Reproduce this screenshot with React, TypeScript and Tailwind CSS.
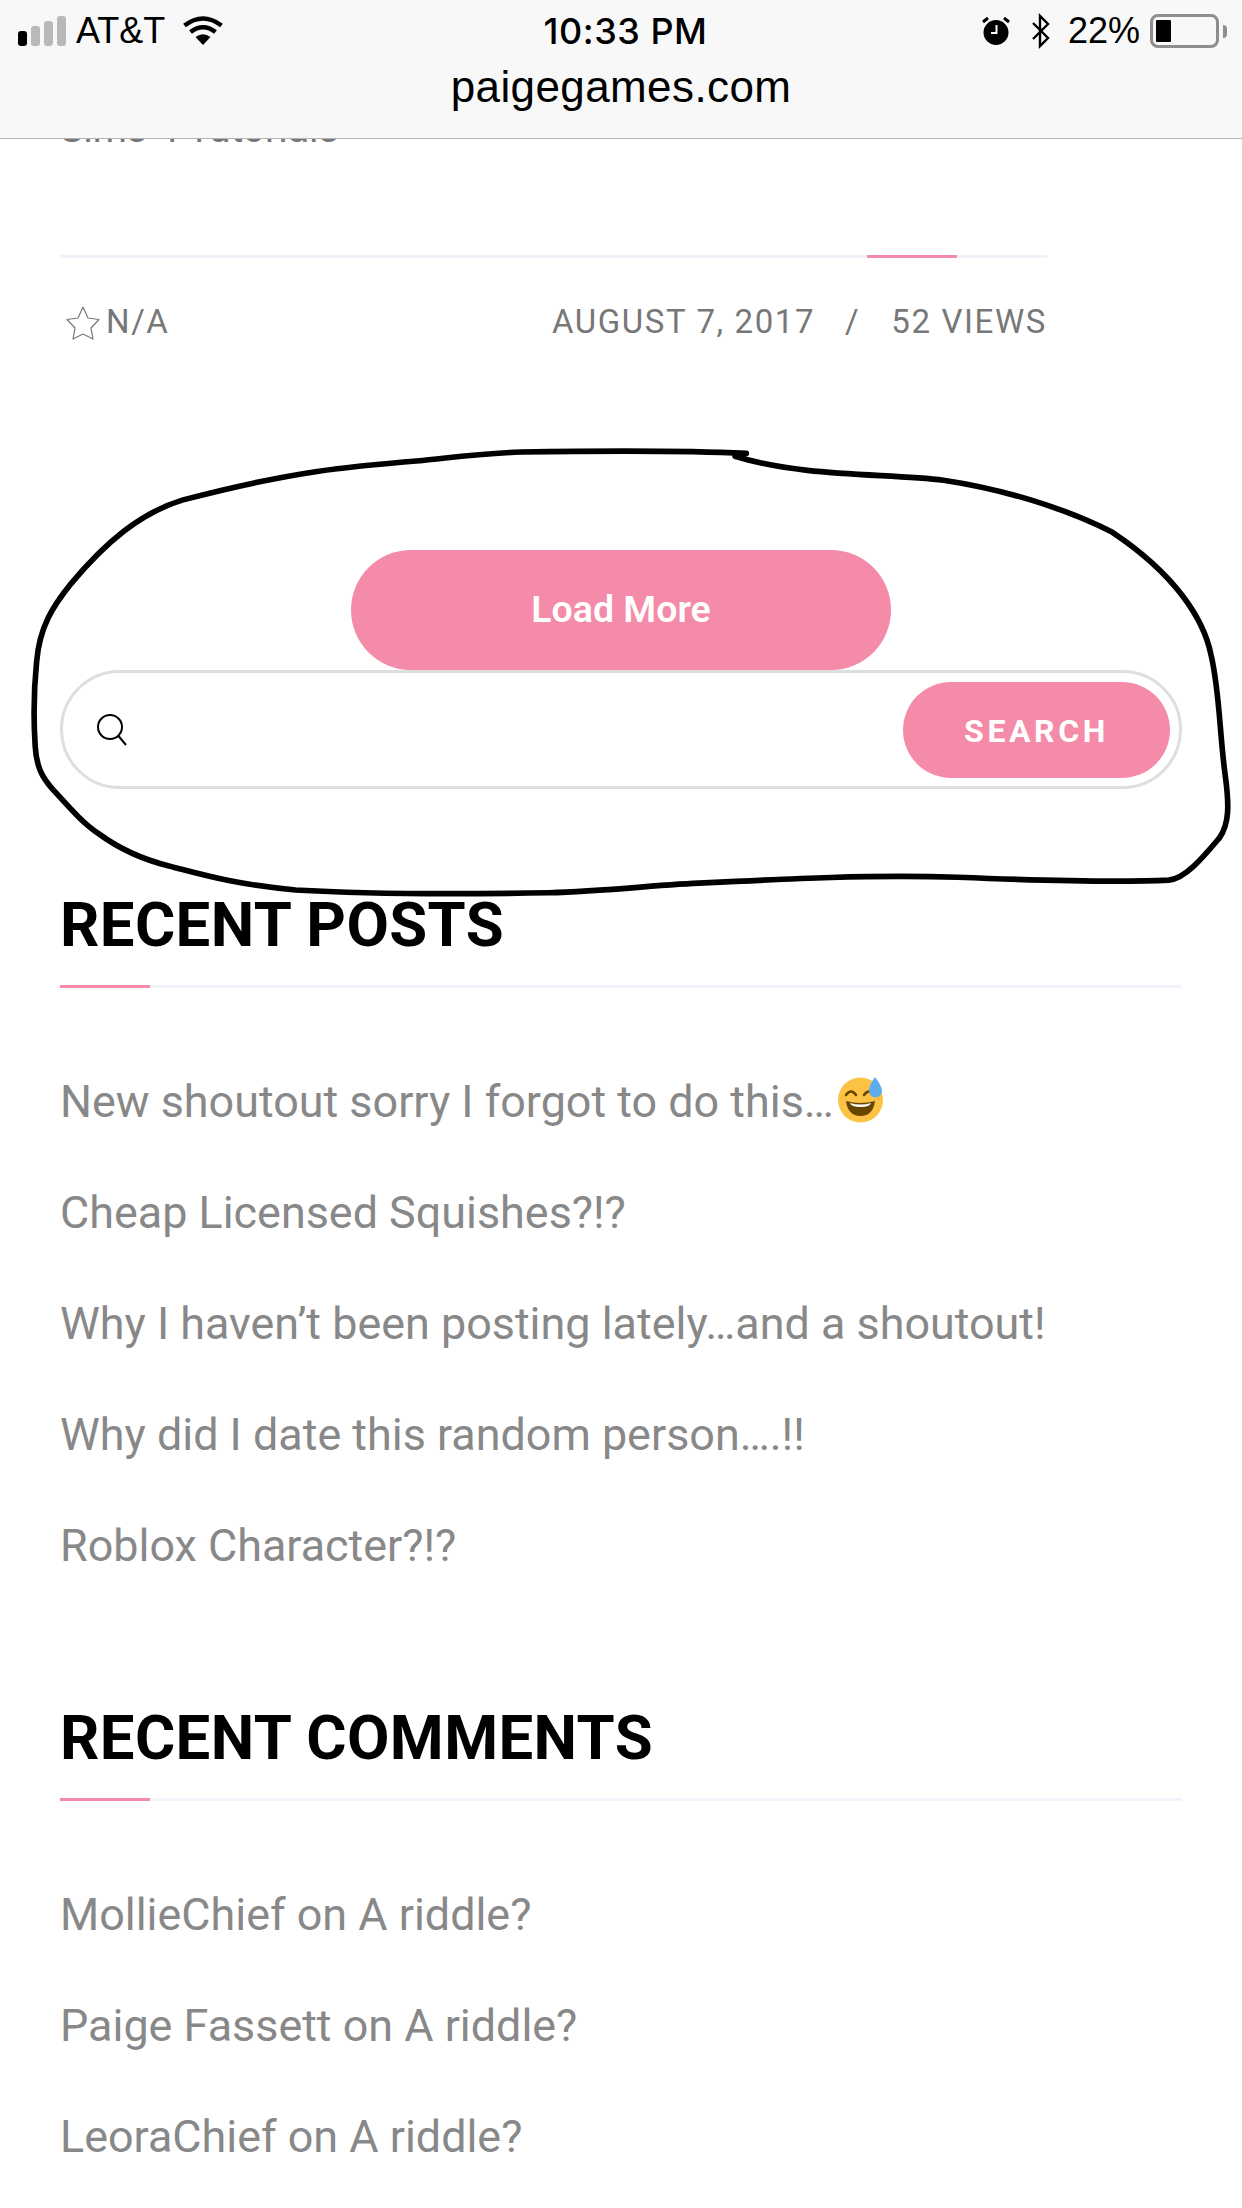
const PINK = 'bg-[#f48ba9]'

const RECENT_POSTS = [
  'New shoutout sorry I forgot to do this…',
  'Cheap Licensed Squishes?!?',
  'Why I haven’t been posting lately…and a shoutout!',
  'Why did I date this random person….!!',
  'Roblox Character?!?',
]

const RECENT_COMMENTS = ['MollieChief on A riddle?', 'Paige Fassett on A riddle?', 'LeoraChief on A riddle?']

function StatusBar() {
  return (
    <div className="flex h-[60px] items-center justify-between pl-[18px] pr-[15px] pt-[2px] text-[36px] text-black">
      <div className="flex w-[400px] items-center">
        <div className="flex items-end gap-[4px]">
          <span className="h-[15px] w-[9px] rounded-[3px] bg-black" />
          <span className="h-[20px] w-[9px] rounded-[3px] bg-[#b9b9b9]" />
          <span className="h-[25px] w-[9px] rounded-[3px] bg-[#b9b9b9]" />
          <span className="h-[30px] w-[9px] rounded-[3px] bg-[#b9b9b9]" />
        </div>
        <span className="ml-[10px]">AT&amp;T</span>
        <svg className="ml-[17px] mt-[-3px]" width="42" height="30" viewBox="0 0 42 30">
          <path d="M21 30 L13.5 22 Q21 16.5 28.5 22 Z" fill="#000" />
          <path d="M8.5 17 Q21 7.5 33.5 17" fill="none" stroke="#000" strokeWidth="4.5" />
          <path d="M2.5 10.5 Q21 -3.5 39.5 10.5" fill="none" stroke="#000" strokeWidth="4.5" />
        </svg>
      </div>
      <span className="ml-[6px] font-['Inter',sans-serif] text-[36px] font-medium tracking-[0.5px]">10:33 PM</span>
      <div className="flex w-[400px] items-center justify-end">
        <svg width="28" height="30" viewBox="0 0 28 30">
          <circle cx="14" cy="16.5" r="12.5" fill="#000" />
          <path d="M1 6 L6 2 M27 6 L22 2" stroke="#000" strokeWidth="3" />
          <path d="M14.5 9 V17 H9" fill="none" stroke="#f8f8f8" strokeWidth="2" />
        </svg>
        <svg className="ml-[21px]" width="20" height="36" viewBox="0 0 20 36">
          <path d="M2 10 L17 25 L9 33 V3 L17 11 L2 26" fill="none" stroke="#000" strokeWidth="2.4" />
        </svg>
        <span className="ml-[17px]">22%</span>
        <div className="ml-[10px] flex h-[34px] w-[69px] items-stretch rounded-[8px] border-[3px] border-[#8e8e8e] p-[3px]">
          <span className="w-[15px] rounded-[1px] bg-black" />
        </div>
        <span className="ml-[4px] h-[13px] w-[4px] rounded-r-full bg-[#8e8e8e]" />
      </div>
    </div>
  )
}

function SectionTitle({ title }: { title: string }) {
  return (
    <div>
      <h2 className="h-[70px] text-[61.6px] leading-[70px] font-bold tracking-[0.4px] text-black">{title}</h2>
      <div className="mt-[25px] flex h-[3px] bg-[#f3f3fb]">
        <span className={`h-full w-[90px] ${PINK}`} />
      </div>
    </div>
  )
}

function LinkList({ items, emojiFirst }: { items: string[]; emojiFirst?: boolean }) {
  return (
    <ul className="mt-[58px] flex flex-col text-[44.9px] text-[#888888]">
      {items.map((item, i) => (
        <li key={item} className="flex h-[111px] items-center leading-[111px]">
          {item}
          {emojiFirst && i === 0 && <SweatSmile />}
        </li>
      ))}
    </ul>
  )
}

function SweatSmile() {
  return (
    <svg className="ml-[3px] mt-[-4px]" width="47" height="47" viewBox="0 0 47 47">
      <circle cx="23.5" cy="24" r="22.5" fill="#fcc244" />
      <path d="M9 19 Q14 12 19 19 M27 19 Q32 12 37 19" fill="none" stroke="#664500" strokeWidth="2.6" strokeLinecap="round" />
      <path d="M9 25 Q23.5 29 38 25 Q36 40 23.5 40 Q11 40 9 25 Z" fill="#664500" />
      <path d="M13 27 Q23.5 30 34 27 Q33 31 23.5 31 Q14 31 13 27 Z" fill="#fff" />
      <path d="M38 1 Q45 10 45 15 A6.5 6.5 0 0 1 32 15 Q32 9 38 1 Z" fill="#5dadec" />
    </svg>
  )
}

export default function App() {
  return (
    <div className="relative h-[2208px] w-[1242px] overflow-hidden bg-white font-['Roboto',sans-serif]">
      <header className="relative z-10 h-[139px] border-b border-[#b4b4b4] bg-[#f8f8f8] font-['Liberation_Sans',sans-serif]">
        <StatusBar />
        <div className="mt-[2px] text-center text-[44px] leading-[50px] tracking-[0.4px] text-black">paigegames.com</div>
      </header>

      <main className="px-[60px]">
        <div className="mt-[-35px] h-[50px] text-[39px] leading-[50px] text-[#777777]">Sims 4 Tutorials</div>

        <div className="mt-[101px] flex h-[3px] w-[987px] bg-[#eff2f9] pl-[807px]">
          <span className={`h-full w-[90px] ${PINK}`} />
        </div>

        <div className="mt-[44px] flex h-[40px] w-[987px] items-center justify-between text-[33px] tracking-[1.6px] text-[#777777]">
          <div className="flex items-center">
            <svg width="36" height="36" viewBox="0 0 36 36" className="ml-[5px] mt-[2px]">
              <path
                d="M18 2 L23 13 L34 14.5 L26 23 L28 34 L18 29 L8 34 L10 23 L2 14.5 L13 13 Z"
                fill="none"
                stroke="#777777"
                strokeWidth="1.2"
                strokeLinejoin="round"
              />
            </svg>
            <span className="ml-[5px]">N/A</span>
          </div>
          <div className="flex items-center">
            <span>AUGUST 7, 2017</span>
            <span className="ml-[30px]">/</span>
            <span className="ml-[31px]">52 VIEWS</span>
          </div>
        </div>

        <div className="mt-[208px] flex justify-center">
          <button className={`h-[120px] w-[540px] rounded-full pb-[2px] ${PINK} text-[37.5px] font-semibold text-white`}>
            Load More
          </button>
        </div>

        <div className="flex h-[119px] items-center justify-between rounded-full border-[3px] border-[#dedede] pl-[32px] pr-[9px]">
          <svg width="34" height="34" viewBox="0 0 34 34" fill="none" stroke="#000" strokeWidth="2">
            <circle cx="15" cy="14" r="12" />
            <path d="M23.5 23 L31 32" />
          </svg>
          <button className={`h-[96px] w-[267px] rounded-full pt-[3px] ${PINK} text-[32px] font-bold tracking-[3.6px] text-white`}>
            SEARCH
          </button>
        </div>

        <div className="mt-[101px]">
          <SectionTitle title="RECENT POSTS" />
          <LinkList items={RECENT_POSTS} emojiFirst />
        </div>

        <div className="mt-[102px]">
          <SectionTitle title="RECENT COMMENTS" />
          <LinkList items={RECENT_COMMENTS} />
        </div>
      </main>

      {/* marker circle someone drew over the screenshot */}
      <svg className="absolute left-0 top-0 z-20" width="1242" height="2208" viewBox="0 0 882 1568" fill="none">
        <path
          d="M530 322 C490 320 430 320 370 321 C340 322 320 325 300 327 C250 331 210 334 130 355 C100 364 75 385 50 415 C38 430 28 445 26 470 C24 490 24 515 25 530 C26 545 30 552 37 560 C48 572 58 584 70 592 C85 603 100 610 120 615 C140 620 165 628 210 632 C260 635 330 635 390 634 C430 633 470 628 500 627 C560 624 620 621 680 623 C730 625 790 627 830 625 C842 624 855 608 866 595 C873 585 873 572 870 550 C866 520 866 490 860 465 C855 440 835 408 790 378 C755 360 710 347 670 341 C630 336 570 339 522 324"
          stroke="#000"
          strokeWidth="4"
          strokeLinecap="round"
          strokeLinejoin="round"
        />
      </svg>
    </div>
  )
}
